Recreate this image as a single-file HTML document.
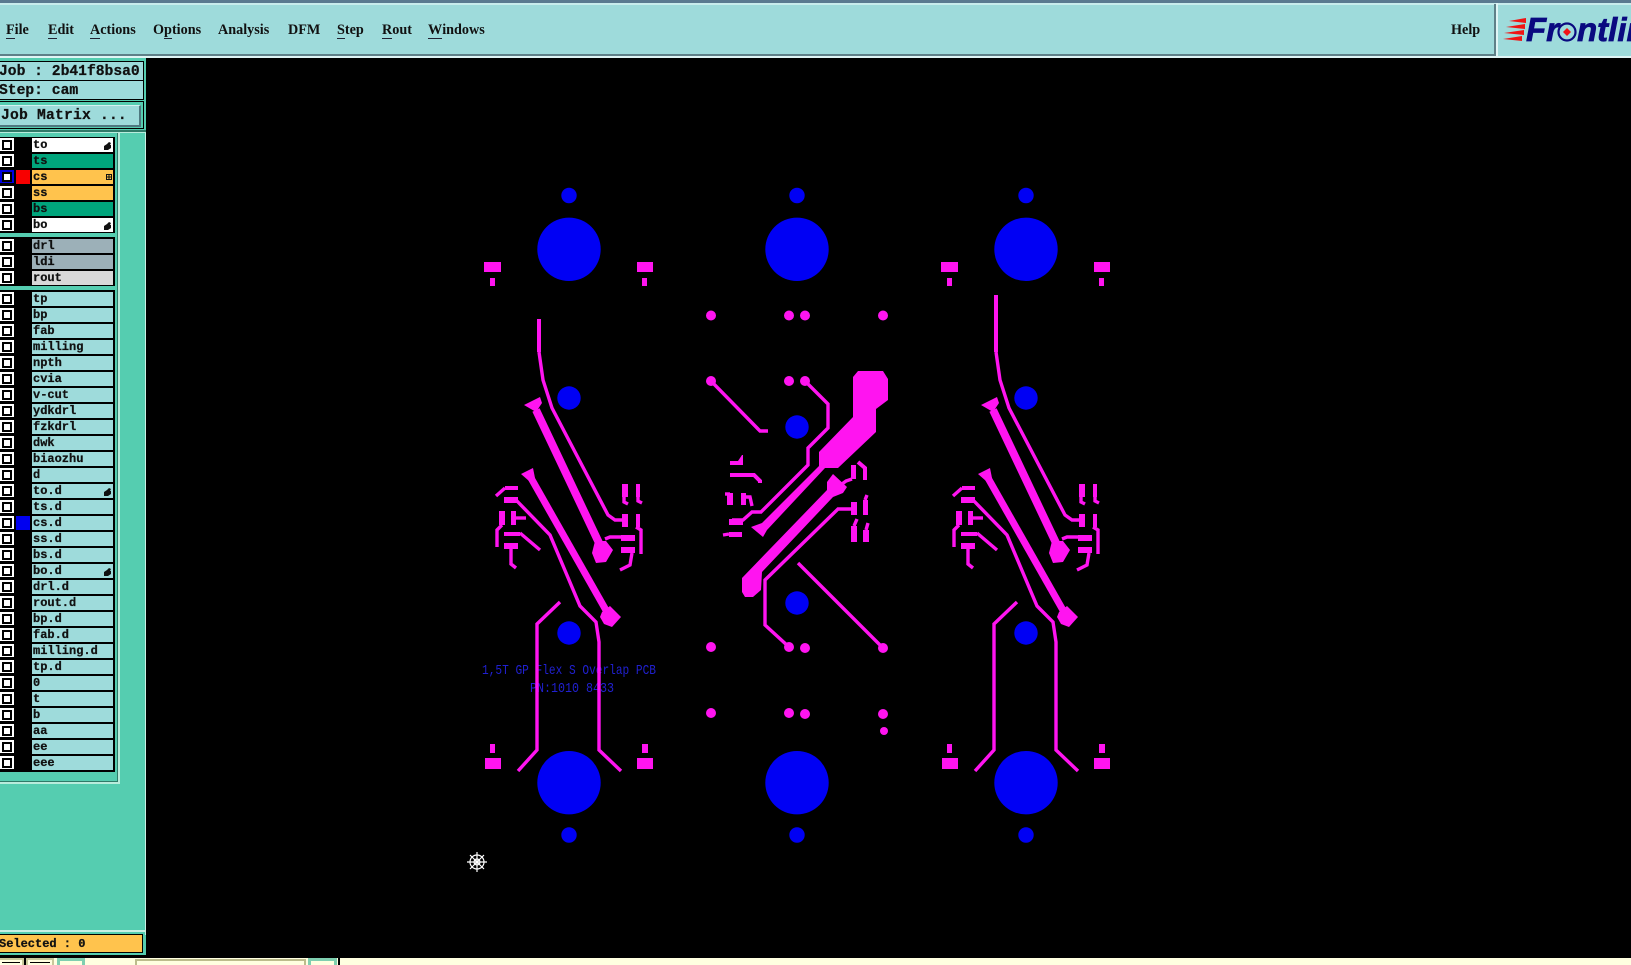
<!DOCTYPE html>
<html><head><meta charset="utf-8"><title>Genesis CAM</title>
<style>
html,body{margin:0;padding:0;background:#000;width:1631px;height:965px;overflow:hidden}
body{position:relative;font-family:"Liberation Mono",monospace}
.a{position:absolute}
.m{position:absolute;top:21px;font:bold 14.2px/18px "Liberation Serif",serif;color:#111}
.m u{text-decoration:none;border-bottom:1.5px solid #223;display:inline-block;line-height:16px;height:16px}
.r{position:absolute;left:0;width:115px;height:16px}
.c{position:absolute;left:0;top:1px;width:14px;height:13px;background:#fff}
.c::before{content:"";position:absolute;left:2px;top:1.5px;width:6px;height:6px;border:2px solid #000;background:#fff}
.c.b{background:#0000e0}
.c.b::before{left:2px;top:1.5px}
.l{position:absolute;left:32px;top:1px;width:81px;height:14px;background:#9edbdb;font:bold 12px/14px "Liberation Mono",monospace;color:#111;padding-left:1px;box-sizing:border-box;white-space:pre;-webkit-text-stroke:.25px #111}
.s{position:absolute;left:16px;top:1px;width:14px;height:14px}
.o{background:#ffc34d}.g{background:#00a57c}.w{background:#fff}.y{background:#9cb0b8}.d{background:#d8d8d8}
.h{position:absolute;right:1px;top:4px}
.t{font:bold 14.67px/20px "Liberation Mono",monospace;color:#111;white-space:pre;-webkit-text-stroke:.25px #111}
</style></head><body>

<!-- top menu -->
<div class="a" style="left:0;top:0;width:1631px;height:3px;background:#5a7a90"></div>
<div class="a" style="left:0;top:3px;width:1631px;height:2px;background:#c8ecec"></div>
<div class="a" style="left:0;top:5px;width:1494px;height:49px;background:#9edbdb"></div>
<div class="a" style="left:0;top:54px;width:1496px;height:2px;background:#5e8088"></div>
<div class="a" style="left:0;top:56px;width:1631px;height:2px;background:#dff5f5"></div>
<div class="a" style="left:1494px;top:4px;width:2px;height:52px;background:#5e8088"></div>
<div class="a" style="left:1496px;top:3px;width:2px;height:55px;background:#dff5f5"></div>
<div class="a" style="left:1498px;top:5px;width:133px;height:51px;background:#9edbdb"></div>

<div class="m" style="left:6px"><u>F</u>ile</div>
<div class="m" style="left:48px"><u>E</u>dit</div>
<div class="m" style="left:90px"><u>A</u>ctions</div>
<div class="m" style="left:153px">O<u>p</u>tions</div>
<div class="m" style="left:218px">Analysis</div>
<div class="m" style="left:288px">DFM</div>
<div class="m" style="left:337px"><u>S</u>tep</div>
<div class="m" style="left:382px"><u>R</u>out</div>
<div class="m" style="left:428px"><u>W</u>indows</div>
<div class="m" style="left:1451px">Help</div>

<!-- logo -->
<svg class="a" style="left:1498px;top:5px" width="133" height="51" viewBox="1498 5 133 51">
<g fill="#f01414">
<polygon points="1509,21 1526,18 1526,23"/><polygon points="1506,27 1525,24 1525,29"/><polygon points="1504,33 1524,30 1524,35"/><polygon points="1503,39 1522,36 1522,41"/>
</g>
<text x="1526" y="41" font-family="Liberation Sans,sans-serif" font-weight="bold" font-style="italic" font-size="33" fill="#0a0a80" stroke="#0a0a80" stroke-width=".7">Fr</text>
<circle cx="1567" cy="32" r="8.5" fill="none" stroke="#0a0a80" stroke-width="2.2"/>
<polygon points="1567,28 1571,32 1567,36 1563,32" fill="#f01414"/>
<text x="1577" y="41" font-family="Liberation Sans,sans-serif" font-weight="bold" font-style="italic" font-size="33" fill="#0a0a80" stroke="#0a0a80" stroke-width=".7">ntlin</text>
</svg>

<!-- left panel -->
<div class="a" style="left:0;top:58px;width:146px;height:897px;background:#55cdb0"></div>
<div class="a" style="left:145px;top:130px;width:1px;height:805px;background:#c8f0e4"></div>
<div class="a" style="left:0;top:61px;width:144px;height:39px;background:#000"></div>
<div class="a t" style="left:0;top:62px;width:143px;height:18px;background:#9edbdb;text-indent:-1px">Job : 2b41f8bsa0</div>
<div class="a t" style="left:0;top:81px;width:143px;height:18px;background:#9edbdb;text-indent:-1px">Step: cam</div>
<div class="a" style="left:0;top:101px;width:144px;height:28px;background:#000"></div>
<div class="a" style="left:0;top:102px;width:143px;height:26px;background:#55cdb0"></div>
<div class="a t" style="left:0;top:105px;width:139px;height:19px;background:#9edbdb;border-top:1px solid #d6f2f2;border-right:2px solid #4f7880;border-bottom:2px solid #4f7880;line-height:20px;letter-spacing:.2px;text-indent:1px">Job Matrix ...</div>
<div class="a" style="left:0;top:130px;width:146px;height:2px;background:#2f7a68"></div>
<div class="a" style="left:0;top:132px;width:146px;height:1px;background:#b8ecdc"></div>

<div class="a" style="left:117px;top:133px;width:1px;height:649px;background:#2f7a68"></div>
<div class="a" style="left:118px;top:133px;width:2px;height:651px;background:#b8ecdc"></div>
<div class="a" style="left:0;top:781px;width:118px;height:1px;background:#2f7a68"></div>
<div class="a" style="left:0;top:782px;width:120px;height:2px;background:#b8ecdc"></div>

<div class="a" style="left:0;top:137px;width:115px;height:96px;background:#000"></div>
<div class="a" style="left:0;top:237px;width:115px;height:49px;background:#000"></div>
<div class="a" style="left:0;top:290px;width:115px;height:482px;background:#000"></div>

<div class="r" style="top:137px"><div class="c"></div><div class="l w">to<svg class="h" width="8" height="8"><polygon points="0,8 0,4 3,2 5,0 7,1 6,3 7,3 7,6 4,8" fill="#111"/></svg></div></div>
<div class="r" style="top:153px"><div class="c"></div><div class="l g">ts</div></div>
<div class="r" style="top:169px"><div class="c b"></div><div class="s" style="background:#f80000"></div><div class="l o">cs<svg class="h" width="6" height="6" style="top:4px;right:1px"><rect x=".5" y=".5" width="5" height="5" fill="none" stroke="#111"/><path d="M3 0V6M0 3H6" stroke="#111"/></svg></div></div>
<div class="r" style="top:185px"><div class="c"></div><div class="l o">ss</div></div>
<div class="r" style="top:201px"><div class="c"></div><div class="l g">bs</div></div>
<div class="r" style="top:217px"><div class="c"></div><div class="l w">bo<svg class="h" width="8" height="8"><polygon points="0,8 0,4 3,2 5,0 7,1 6,3 7,3 7,6 4,8" fill="#111"/></svg></div></div>

<div class="r" style="top:238px"><div class="c"></div><div class="l y">drl</div></div>
<div class="r" style="top:254px"><div class="c"></div><div class="l y">ldi</div></div>
<div class="r" style="top:270px"><div class="c"></div><div class="l d">rout</div></div>

<div class="r" style="top:291px"><div class="c"></div><div class="l">tp</div></div>
<div class="r" style="top:307px"><div class="c"></div><div class="l">bp</div></div>
<div class="r" style="top:323px"><div class="c"></div><div class="l">fab</div></div>
<div class="r" style="top:339px"><div class="c"></div><div class="l">milling</div></div>
<div class="r" style="top:355px"><div class="c"></div><div class="l">npth</div></div>
<div class="r" style="top:371px"><div class="c"></div><div class="l">cvia</div></div>
<div class="r" style="top:387px"><div class="c"></div><div class="l">v-cut</div></div>
<div class="r" style="top:403px"><div class="c"></div><div class="l">ydkdrl</div></div>
<div class="r" style="top:419px"><div class="c"></div><div class="l">fzkdrl</div></div>
<div class="r" style="top:435px"><div class="c"></div><div class="l">dwk</div></div>
<div class="r" style="top:451px"><div class="c"></div><div class="l">biaozhu</div></div>
<div class="r" style="top:467px"><div class="c"></div><div class="l">d</div></div>
<div class="r" style="top:483px"><div class="c"></div><div class="l">to.d<svg class="h" width="8" height="8"><polygon points="0,8 0,4 3,2 5,0 7,1 6,3 7,3 7,6 4,8" fill="#111"/></svg></div></div>
<div class="r" style="top:499px"><div class="c"></div><div class="l">ts.d</div></div>
<div class="r" style="top:515px"><div class="c"></div><div class="s" style="background:#0000f0"></div><div class="l">cs.d</div></div>
<div class="r" style="top:531px"><div class="c"></div><div class="l">ss.d</div></div>
<div class="r" style="top:547px"><div class="c"></div><div class="l">bs.d</div></div>
<div class="r" style="top:563px"><div class="c"></div><div class="l">bo.d<svg class="h" width="8" height="8"><polygon points="0,8 0,4 3,2 5,0 7,1 6,3 7,3 7,6 4,8" fill="#111"/></svg></div></div>
<div class="r" style="top:579px"><div class="c"></div><div class="l">drl.d</div></div>
<div class="r" style="top:595px"><div class="c"></div><div class="l">rout.d</div></div>
<div class="r" style="top:611px"><div class="c"></div><div class="l">bp.d</div></div>
<div class="r" style="top:627px"><div class="c"></div><div class="l">fab.d</div></div>
<div class="r" style="top:643px"><div class="c"></div><div class="l">milling.d</div></div>
<div class="r" style="top:659px"><div class="c"></div><div class="l">tp.d</div></div>
<div class="r" style="top:675px"><div class="c"></div><div class="l">0</div></div>
<div class="r" style="top:691px"><div class="c"></div><div class="l">t</div></div>
<div class="r" style="top:707px"><div class="c"></div><div class="l">b</div></div>
<div class="r" style="top:723px"><div class="c"></div><div class="l">aa</div></div>
<div class="r" style="top:739px"><div class="c"></div><div class="l">ee</div></div>
<div class="r" style="top:755px"><div class="c"></div><div class="l">eee</div></div>

<div class="a" style="left:0;top:930px;width:146px;height:2px;background:#c8f0e4"></div>
<div class="a" style="left:0;top:934px;width:143px;height:19px;box-sizing:border-box;background:#ffc34d;border:1px solid #000;border-left:0;font:bold 12px/18px 'Liberation Mono',monospace;color:#111;text-indent:-1px;white-space:pre;-webkit-text-stroke:.25px #111">Selected : 0</div>

<!-- canvas -->
<svg class="a" style="left:146px;top:58px" width="1485" height="900" viewBox="146 58 1485 900">
<defs>
<g id="board">
<g fill="#0000f4">
<circle cx="569" cy="195.5" r="7.7"/><circle cx="569" cy="249.3" r="31.7"/>
<circle cx="569" cy="782.7" r="31.7"/><circle cx="569" cy="835" r="7.7"/>
</g>
</g>
<g id="mid">
<g fill="#0000f4"><circle cx="569" cy="398" r="11.7"/><circle cx="569" cy="633" r="11.7"/></g>
</g>
<g id="traces">
<g fill="#ff14f0">
<rect x="484" y="262" width="17" height="10"/><rect x="490" y="278" width="5" height="8"/>
<rect x="637" y="262" width="16" height="10"/><rect x="642" y="278" width="5" height="8"/>
<rect x="490" y="744" width="5" height="9"/><rect x="485" y="758" width="16" height="11"/>
<rect x="642" y="744" width="6" height="9"/><rect x="637" y="758" width="16" height="11"/>
<polygon points="524,405 540,397 542,403 536,412"/>
<polygon points="521,474 533,468 535,478 529,481"/>
<polygon points="595,541 606,541 613,550 606,562 596,563 592,553"/>
<polygon points="602,612 610,606 621,617 612,627 604,624 600,617"/>
<rect x="505" y="486" width="13" height="4"/><rect x="504" y="497" width="14" height="6"/>
<rect x="499" y="511" width="6" height="14"/><rect x="511" y="511" width="5" height="14"/>
<rect x="504" y="532" width="16" height="4"/><rect x="504" y="543" width="14" height="6"/>
<rect x="622" y="484" width="6" height="13"/><rect x="636" y="484" width="4" height="13"/>
<rect x="636" y="514" width="4" height="13"/><rect x="622" y="514" width="6" height="13"/>
<rect x="621" y="535" width="14" height="6"/><rect x="621" y="547" width="14" height="6"/>
</g>
<g fill="none" stroke="#ff14f0" stroke-width="3.4">
<path d="M539,352L543,380L552,408L608,515L615,520H625"/>
<path d="M496,496L505,488"/>
<path d="M516,500L550,535L580,606L596,622L599,642V750L621,771"/>
<path d="M502,525L497,530V547"/>
<path d="M516,518H526"/>
<path d="M520,533L540,550"/>
<path d="M511,549V564L516,568"/>
<path d="M560,602L537,624V750L518,771"/>
<path d="M624,497V502L628,504"/>
<path d="M638,497L638,501L642,503"/>
<path d="M636,527L641,530V554"/>
<path d="M605,539L610,537H625"/>
<path d="M632,553L630,565L620,570"/>
</g>
<g fill="none" stroke="#ff14f0">
<path d="M536,410L600,545" stroke-width="8"/>
<path d="M531,478L607,612" stroke-width="7"/>
</g>
</g>
</defs>

<use href="#board"/>
<use href="#board" x="228"/>
<use href="#board" x="457"/>
<use href="#mid"/>
<use href="#mid" x="457"/>
<circle cx="797" cy="427" r="11.7" fill="#0000f4"/>
<circle cx="797" cy="603" r="11.7" fill="#0000f4"/>

<text x="482" y="674" font-family="Liberation Mono,monospace" font-size="14" fill="#2020d0" textLength="174" lengthAdjust="spacingAndGlyphs">1,5T GP Flex S Overlap PCB</text>
<text x="530" y="692" font-family="Liberation Mono,monospace" font-size="14" fill="#2020d0" textLength="84" lengthAdjust="spacingAndGlyphs">PN:1010 8433</text>

<use href="#traces"/>
<rect x="537" y="319" width="4" height="33" fill="#ff14f0"/>
<use href="#traces" x="457"/>
<rect x="994" y="295" width="4" height="57" fill="#ff14f0"/>

<!-- middle board -->
<g fill="#ff14f0">
<circle cx="711" cy="315.5" r="5"/><circle cx="789" cy="315.5" r="5"/><circle cx="805" cy="315.5" r="5"/><circle cx="883" cy="315.5" r="5"/>
<circle cx="711" cy="381" r="5"/><circle cx="789" cy="381" r="5"/><circle cx="805" cy="381" r="5"/>
<circle cx="711" cy="647" r="5"/><circle cx="789" cy="647" r="5"/><circle cx="805" cy="648" r="5"/><circle cx="883" cy="648" r="5"/>
<circle cx="711" cy="713" r="5"/><circle cx="789" cy="713" r="5"/><circle cx="805" cy="714" r="5"/><circle cx="883" cy="714" r="5"/>
<circle cx="884" cy="731" r="4"/>
<polygon points="858,371 883,371 888,379 888,400 876,409 876,432 838,468 825,468 767,530 763,537 751,527 762,523 819,466 819,452 853,417 853,377"/>
<polygon points="833,474 847,487 843,493 833,497 762,572 761,590 753,597 745,597 742,592 742,578 827,490 827,482"/>
<polygon points="730,461 738,461 742,455 743,455 743,465 730,465"/>
<rect x="727" y="493" width="6" height="12"/><rect x="741" y="493" width="5" height="12"/>
<rect x="729" y="519" width="14" height="6"/><rect x="729" y="532" width="13" height="5"/>
<rect x="851" y="465" width="5" height="14"/><rect x="851" y="502" width="6" height="13"/>
<rect x="863" y="500" width="5" height="15"/><rect x="851" y="526" width="6" height="16"/><rect x="863" y="530" width="6" height="12"/>
</g>
<g fill="none" stroke="#ff14f0" stroke-width="3.4">
<path d="M711,381L760,431H768"/>
<path d="M805,381L828,404V428L808,448V465L761,512H752L743,520H732"/>
<path d="M855,509H838L765,580V625L789,647"/>
<path d="M798,563L883,648"/>
<path d="M730,475H754L760,481V483" stroke-width="4"/>
<path d="M725,494H730"/>
<path d="M745,497H750L752,506"/>
<path d="M723,535L729,534"/>
<path d="M852,479L846,481L842,484"/>
<path d="M858,462L865,468V480" stroke-width="4"/>
<path d="M867,495L865,500"/>
<path d="M857,519L854,526"/>
<path d="M868,523L866,530"/>
</g>

<!-- cursor -->
<g fill="none" stroke="#fff" stroke-width="1.2">
<circle cx="477" cy="862" r="7"/><circle cx="477" cy="862" r="3"/>
<path d="M477,852V872M467,862H487M470,855L484,869M484,855L470,869"/>
</g>
</svg>

<!-- bottom bar -->
<div class="a" style="left:0;top:958px;width:1631px;height:7px;background:#ffffe0"></div>
<div class="a" style="left:0;top:958px;width:24px;height:7px;box-sizing:border-box;border:2px solid #c8c89a;border-bottom:0;border-left:0"></div>
<div class="a" style="left:2px;top:962px;width:18px;height:3px;border-top:1px solid #000"></div>
<div class="a" style="left:24px;top:958px;width:2px;height:7px;background:#000"></div>
<div class="a" style="left:26px;top:958px;width:28px;height:7px;box-sizing:border-box;border:2px solid #c8c89a;border-bottom:0"></div>
<div class="a" style="left:30px;top:962px;width:20px;height:3px;border-top:1px solid #000"></div>
<div class="a" style="left:57px;top:958px;width:28px;height:7px;box-sizing:border-box;border:3px solid #7fcfb0;border-bottom:0"></div>
<div class="a" style="left:135px;top:959px;width:171px;height:6px;box-sizing:border-box;border:2px solid #bcbc8c;border-bottom:0"></div>
<div class="a" style="left:308px;top:958px;width:29px;height:7px;box-sizing:border-box;border:3px solid #7fcfb0;border-bottom:0"></div>
<div class="a" style="left:338px;top:958px;width:2px;height:7px;background:#000"></div>
</body></html>
